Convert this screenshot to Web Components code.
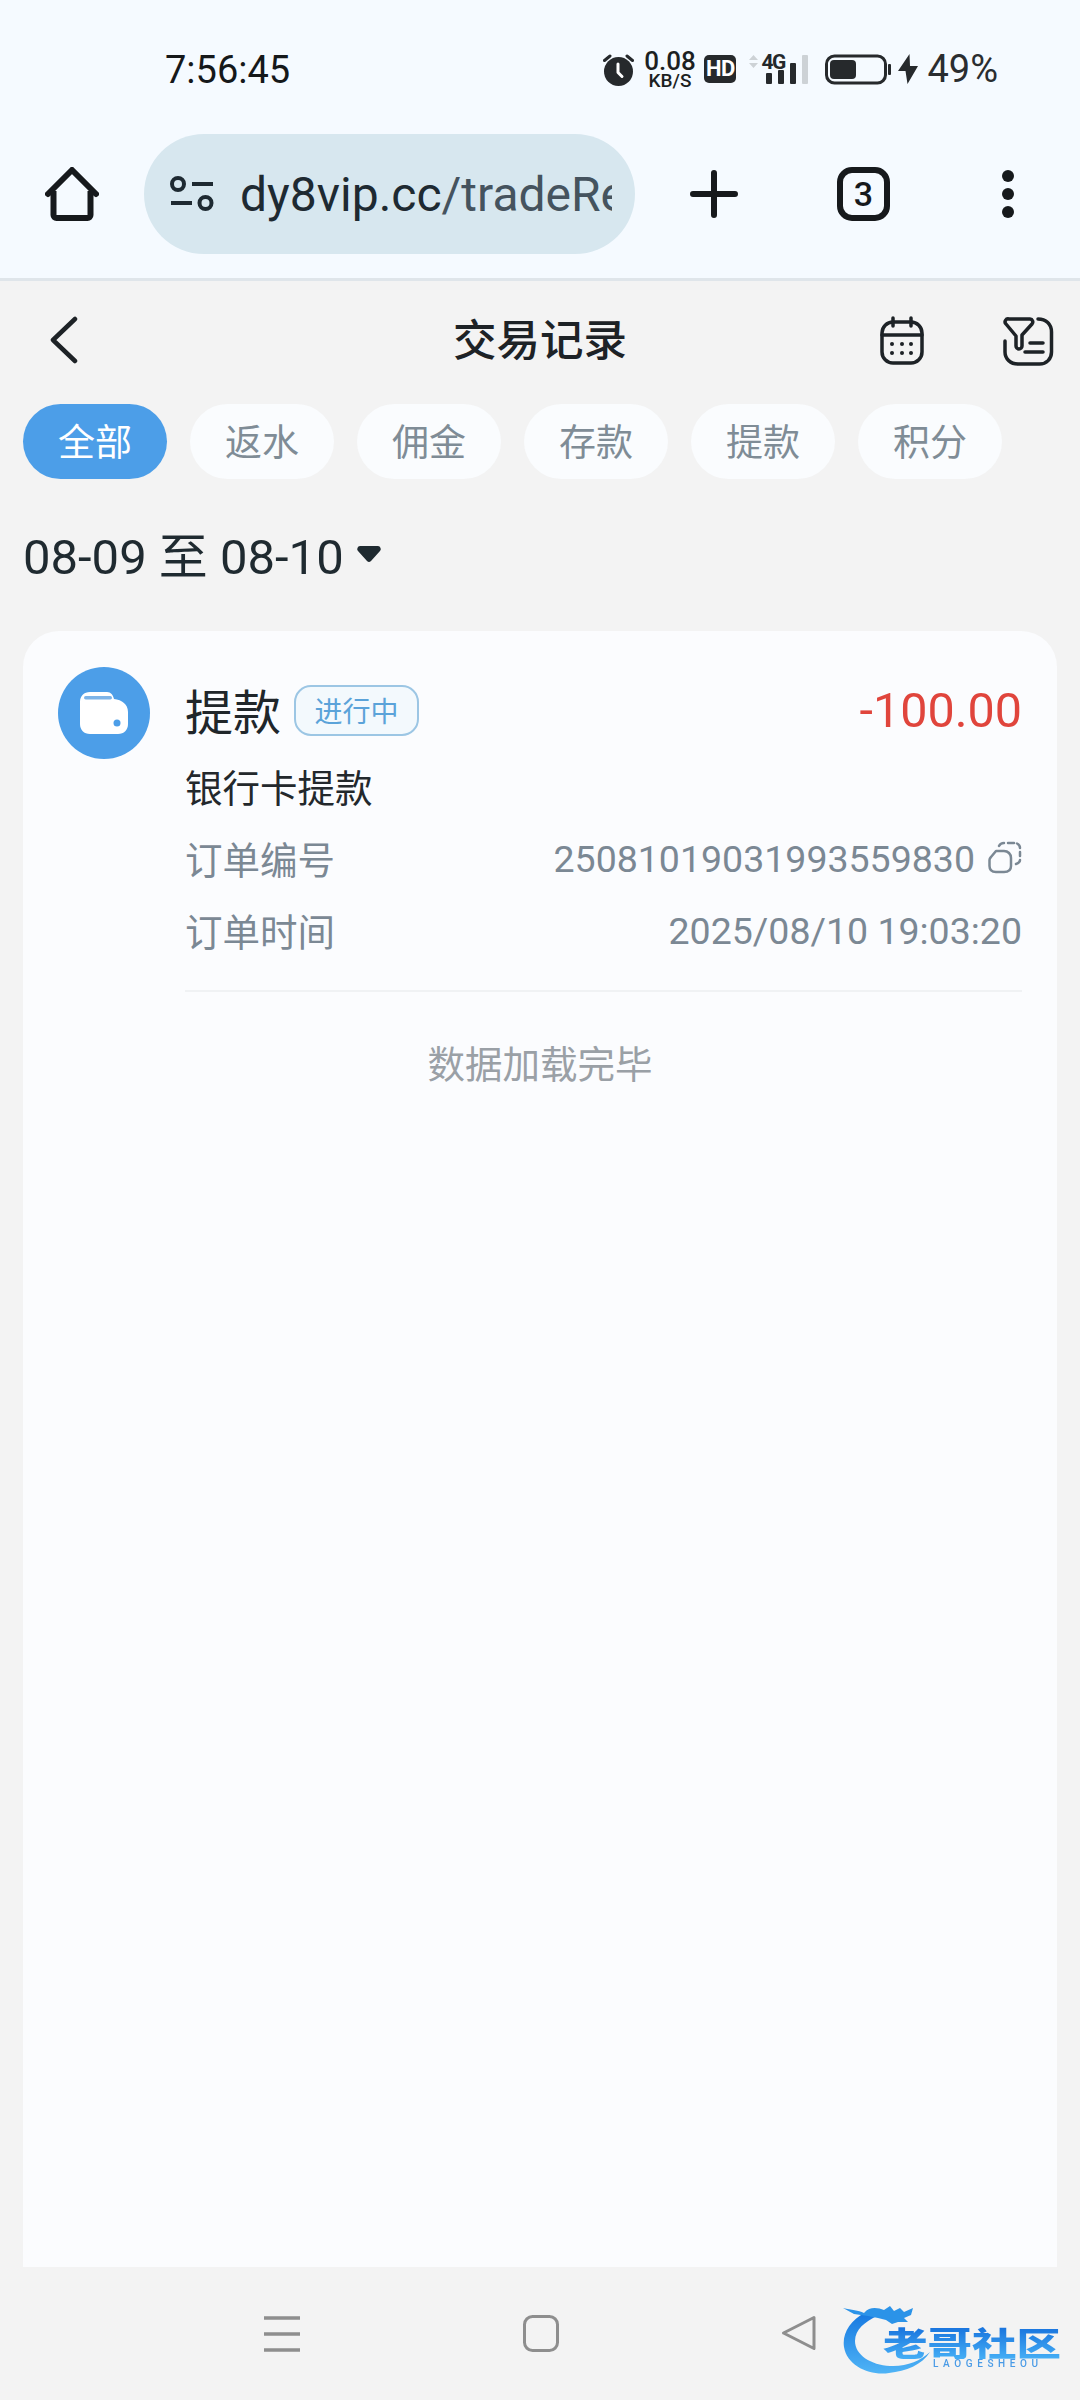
<!DOCTYPE html>
<html lang="zh">
<head>
<meta charset="utf-8">
<title>交易记录</title>
<style>
  html, body { margin: 0; padding: 0; }
  body {
    width: 1080px;
    height: 2400px;
    overflow: hidden;
    display: flex;
    flex-direction: column;
    position: relative;
    background: #f3f3f3;
    font-family: Roboto, "Noto Sans CJK SC", sans-serif;
  }
</style>
</head>
<body>
  <status-bar></status-bar>
  <browser-toolbar domain="dy8vip.cc" path="/tradeRecord" tabs="3"></browser-toolbar>
  <page-header>交易记录</page-header>
  <filter-chips>
    <filter-chip active>全部</filter-chip>
    <filter-chip>返水</filter-chip>
    <filter-chip>佣金</filter-chip>
    <filter-chip>存款</filter-chip>
    <filter-chip>提款</filter-chip>
    <filter-chip>积分</filter-chip>
  </filter-chips>
  <date-range>08-09 至 08-10</date-range>
  <trade-panel>
    <trade-item title="提款" status="进行中" amount="-100.00" method="银行卡提款">
      <trade-row label="订单编号" value="25081019031993559830" copy></trade-row>
      <trade-row label="订单时间" value="2025/08/10 19:03:20"></trade-row>
    </trade-item>
    <span slot="footer">数据加载完毕</span>
  </trade-panel>
  <nav-bar></nav-bar>
  <site-watermark></site-watermark>

<script>
// каждый элемент держит свой шаблон и стили внутри shadow root
function define(name, html, attrs) {
  const tpl = document.createElement('template');
  tpl.innerHTML = html;
  customElements.define(name, class extends HTMLElement {
    constructor() {
      super();
      this.attachShadow({ mode: 'open' }).appendChild(tpl.content.cloneNode(true));
    }
    connectedCallback() {
      (attrs || []).forEach(a => {
        this.shadowRoot.querySelectorAll('[data-' + a + ']').forEach(el => {
          el.textContent = this.getAttribute(a) || '';
        });
      });
      if (this.hasAttribute('copy')) {
        this.shadowRoot.querySelector('.copy').style.display = 'block';
      }
    }
  });
}

define('status-bar', `
<style>
  :host { display: flex; align-items: center; box-sizing: border-box; height: 134px; padding: 4px 82px 0 165px; background: #f5faff; color: #24282b; flex: none; }
  .time { font-size: 38px; color: #15181a; margin-top: 2px; }
  .right { margin-left: auto; display: flex; align-items: center; }
  svg { display: block; flex: none; }
  .speed { width: 51px; margin: 0 9px 0 10px; display: flex; flex-direction: column; align-items: center; line-height: 1; color: #1c1f22; }
  .speed b { font-size: 26px; font-weight: 500; height: 20px; line-height: 20px; }
  .speed i { font-style: normal; font-size: 19px; font-weight: 500; height: 15px; line-height: 15px; margin-top: 2px; }
  .hd { width: 32px; height: 28px; border-radius: 5px; background: #26292c; color: #fff; font: 700 22px/28px "Liberation Sans Narrow", Roboto, sans-serif; text-align: center; letter-spacing: -.5px; margin-right: 13px; }
  .net { position: relative; width: 59px; height: 31px; margin-right: 17px; }
  .net span { position: absolute; left: 12px; top: -3px; font-size: 21px; line-height: 22px; font-weight: 700; letter-spacing: -1.500px; color: #24282b; }
  .pct { font-size: 38px; margin-left: 9px; color: #2a2d30; }
</style>
<span class="time">7:56:45</span>
<div class="right">
  <svg width="31" height="33" viewBox="0 0 31 33">
    <circle cx="15.5" cy="18.5" r="14.5" fill="#26292c"/>
    <path d="M1.5 7.5 7 3M29.5 7.5 24 3" stroke="#26292c" stroke-width="3" stroke-linecap="round"/>
    <path d="M15 11v8.5l4 4" fill="none" stroke="#fff" stroke-width="3" stroke-linecap="round" stroke-linejoin="round"/>
  </svg>
  <div class="speed"><b>0.08</b><i>KB/S</i></div>
  <div class="hd">HD</div>
  <div class="net">
    <svg width="59" height="31" viewBox="0 0 59 31">
      <path d="M4.5 1 9 6H0ZM4.5 14 0 9h9Z" fill="#cdd2d6"/>
      <rect x="17" y="19" width="6" height="11" rx="1" fill="#26292c"/>
      <rect x="29" y="16" width="6" height="14" rx="1" fill="#26292c"/>
      <rect x="41" y="9" width="6" height="21" rx="1" fill="#26292c"/>
      <rect x="53" y="1" width="6" height="29" rx="1" fill="#cdd2d6"/>
    </svg>
    <span>4G</span>
  </div>
  <svg width="66" height="31" viewBox="0 0 66 31">
    <rect x="1.5" y="2" width="59" height="27" rx="8" fill="none" stroke="#26292c" stroke-width="3"/>
    <rect x="5" y="6" width="26" height="19" rx="4" fill="#26292c"/>
    <rect x="63" y="10" width="3" height="11" rx="1" fill="#26292c"/>
  </svg>
  <svg style="margin-left:7px" width="20" height="30" viewBox="0 0 20 30">
    <path d="M11.5 0 0 17h7.5L9.5 30 20 12h-8Z" fill="#26292c"/>
  </svg>
  <span class="pct">49%</span>
</div>`);

define('browser-toolbar', `
<style>
  :host { display: flex; align-items: flex-start; box-sizing: content-box; height: 144px; padding-left: 45px; background: #f5faff; border-bottom: 3px solid #dfe5ea; color: #16191c; flex: none; }
  svg { display: block; flex: none; }
  .home { margin: 33px 45px 0 0; }
  .pill { width: 491px; height: 120px; border-radius: 60px; background: #d7e7ef; display: flex; align-items: center; padding-left: 26px; box-sizing: border-box; flex: none; }
  .url { width: 372px; margin-left: 26px; overflow: hidden; white-space: nowrap; font-size: 48px; color: #1e2a32; }
  .url span { color: #45535e; }
  .plus { margin: 36px 0 0 55px; }
  .tabs { margin: 33px 0 0 99px; width: 53px; height: 54px; box-sizing: border-box; border: 6px solid #16191c; border-radius: 15px; display: flex; align-items: center; justify-content: center; font-size: 34px; font-weight: 500; }
  .more { margin: 36px 0 0 112px; }
</style>
<svg class="home" width="54" height="54" viewBox="0 0 54 54">
  <path d="M3 27 27 3l24 24" fill="none" stroke="#16191c" stroke-width="6" stroke-linecap="round" stroke-linejoin="round"/>
  <path d="M8.500 24V48a3 3 0 0 0 3 3H42.500a3 3 0 0 0 3-3V24" fill="none" stroke="#16191c" stroke-width="6" stroke-linejoin="round"/>
</svg>
<div class="pill">
  <svg width="44" height="36" viewBox="0 0 44 36">
    <circle cx="8" cy="8" r="6" fill="none" stroke="#1e2a32" stroke-width="4"/>
    <path d="M22 8h21M1 27h21" stroke="#1e2a32" stroke-width="4"/>
    <circle cx="35.500" cy="27" r="6" fill="none" stroke="#1e2a32" stroke-width="4"/>
  </svg>
  <div class="url"><b data-domain style="font-weight:400"></b><span data-path></span></div>
</div>
<svg class="plus" width="48" height="48" viewBox="0 0 48 48">
  <path d="M24 3v42M3 24h42" stroke="#16191c" stroke-width="6" stroke-linecap="round"/>
</svg>
<div class="tabs" data-tabs></div>
<svg class="more" width="12" height="48" viewBox="0 0 12 48">
  <circle cx="6" cy="6" r="6" fill="#16191c"/><circle cx="6" cy="24" r="6" fill="#16191c"/><circle cx="6" cy="42" r="6" fill="#16191c"/>
</svg>`, ['domain', 'path', 'tabs']);

define('page-header', `
<style>
  :host { display: grid; grid-template-columns: 1fr auto 1fr; align-items: center; height: 118px; flex: none; color: #1d2226; }
  .title { font-size: 43.500px; font-weight: 500; margin-bottom: 5px; }
  svg { display: block; }
  .left { padding-left: 49px; }
  .right { display: flex; justify-content: flex-end; gap: 78px; padding: 2px 25px 0 0; }
</style>
<div class="left">
  <svg width="30" height="48" viewBox="0 0 30 48"><path d="M26 3 4 24l22 21" fill="none" stroke="#1d2226" stroke-width="4.500" stroke-linecap="round" stroke-linejoin="round"/></svg>
</div>
<div class="title"><slot></slot></div>
<div class="right">
  <svg width="46" height="50" viewBox="0 0 46 50">
    <rect x="3" y="6" width="40" height="41" rx="11" fill="none" stroke="#1d2226" stroke-width="3.500"/>
    <path d="M3 19h40M14 2v8M32 2v8" stroke="#1d2226" stroke-width="3.500" stroke-linecap="round"/>
    <g fill="#1d2226"><circle cx="13" cy="28" r="2"/><circle cx="23" cy="28" r="2"/><circle cx="32" cy="28" r="2"/><circle cx="13" cy="37" r="2"/><circle cx="23" cy="37" r="2"/><circle cx="32" cy="37" r="2"/></g>
  </svg>
  <svg width="52" height="50" viewBox="0 0 52 50">
    <g fill="none" stroke="#1d2226" stroke-width="3.500" stroke-linecap="round" stroke-linejoin="round">
      <path d="M6 3H27a3 3 0 0 1 2 5L19 19V30a3 3 0 0 1-6 0V20L3 8a3 3 0 0 1 3-5Z"/>
      <path d="M35 3c8 0 13.500 5 13.500 13V36c0 7-5 12-12 12H15C7.500 48 2 43 2 36V25"/>
      <path d="M27 27H40M22 36H40"/>
    </g>
  </svg>
</div>`);

define('filter-chips', `
<style>
  :host { display: flex; gap: 23px; padding: 5px 23px 0; flex: none; }
</style>
<slot></slot>`);

define('filter-chip', `
<style>
  :host { display: flex; align-items: center; justify-content: center; box-sizing: border-box; width: 144px; height: 75px; padding-bottom: 3px; border-radius: 38px; background: #fafcfe; color: #7f8c96; font-size: 37px; }
  :host([active]) { background: #4c9ee8; color: #fff; }
</style>
<slot></slot>`);

define('date-range', `
<style>
  :host { display: flex; align-items: center; gap: 12px; box-sizing: border-box; height: 152px; padding: 0 0 6px 23px; flex: none; font-size: 49px; color: #1f2a30; }
  svg { display: block; margin-top: 4px; }
</style>
<span><slot></slot></span>
<svg width="26" height="18" viewBox="0 0 26 18"><path d="M4 1h18a3 3 0 0 1 2 5L15 16a3 3 0 0 1-4 0L2 6a3 3 0 0 1 2-5Z" fill="#1f2a30"/></svg>`);

define('trade-panel', `
<style>
  :host { display: block; flex: 1; margin: 0 23px; background: #fbfcfe; border-radius: 36px 36px 0 0; padding: 36px 35px 0; box-sizing: border-box; }
  .foot { height: 138px; display: flex; align-items: center; justify-content: center; color: #9aa0a6; font-size: 37.500px; }
</style>
<slot></slot>
<div class="foot"><slot name="footer"></slot></div>`);

define('trade-item', `
<style>
  :host { display: grid; grid-template-columns: 92px 1fr; column-gap: 35px; color: #20262a; }
  .avatar { width: 92px; height: 92px; border-radius: 50%; background: #4c9ee8; display: flex; align-items: center; justify-content: center; }
  svg { display: block; }
  .head { display: flex; align-items: center; height: 84px; margin-bottom: -2px; }
  .title { font-size: 48px; }
  .badge { margin: 2px 0 0 13px; width: 125px; height: 51px; box-sizing: border-box; border: 2px solid #9cc6e4; border-radius: 17px; background: #f3f9fd; color: #5ba3d9; font-size: 28px; display: flex; align-items: center; justify-content: center; }
  .amount { margin: 2px 0 0 auto; font-size: 48.500px; color: #e0453c; }
  .method { height: 72px; display: flex; align-items: center; font-size: 37.500px; color: #23282c; }
  .rows { display: block; padding-bottom: 25px; border-bottom: 2px solid #f0f2f4; }
  .body { min-width: 0; }
</style>
<div class="avatar">
  <svg width="48" height="42" viewBox="0 0 48 42">
    <path d="M10 0H27C31 0 33 3 34 7 42 8 48 12 48 20V32C48 38 44 42 38 42H10C4 42 0 38 0 32V10C0 4 4 0 10 0Z" fill="#fff"/>
    <rect x="4" y="4" width="28" height="3.500" rx="1.700" fill="#7db4e8"/>
    <circle cx="37" cy="31" r="3.500" fill="#4c9ee8"/>
  </svg>
</div>
<div class="body">
  <div class="head">
    <span class="title" data-title></span>
    <span class="badge" data-status></span>
    <span class="amount" data-amount></span>
  </div>
  <div class="method" data-method></div>
  <div class="rows"><slot></slot></div>
</div>`, ['title', 'status', 'amount', 'method']);

define('trade-row', `
<style>
  :host { display: flex; align-items: center; height: 72px; font-size: 37.500px; color: #7b8894; }
  .value { margin: 4px 0 0 auto; }
  .copy { display: none; margin-left: 13px; flex: none; }
</style>
<span data-label></span>
<span class="value" data-value></span>
<svg class="copy" width="34" height="33" viewBox="0 0 34 33">
  <path d="M3 16 8 10H16C20 10 23 13 23 17V25C23 29 20 31 16 31H8C4 31 1.500 29 1.500 25V19C1.500 18 2 17 3 16Z" fill="none" stroke="#7b8894" stroke-width="2.500" stroke-linejoin="round"/>
  <path d="M11 5C12 3 14 2 16 2M20 2H26M29 2.500C31 3.500 32 5 32 7M32 11V15M32 19C32 21 31 22 28 23" fill="none" stroke="#7b8894" stroke-width="2.500" stroke-linecap="round"/>
</svg>`, ['label', 'value']);

define('nav-bar', `
<style>
  :host { display: flex; align-items: flex-start; height: 133px; flex: none; padding: 48px 0 0 264px; box-sizing: border-box; }
  svg { display: block; flex: none; }
</style>
<svg width="36" height="38" viewBox="0 0 36 38"><path d="M0 3h36M0 19h36M0 35h36" stroke="#8e8e8e" stroke-width="3.500"/></svg>
<svg style="margin-left:223px" width="36" height="37" viewBox="0 0 36 37"><rect x="1.500" y="1.500" width="33" height="34" rx="8" fill="none" stroke="#8e8e8e" stroke-width="3"/></svg>
<svg style="margin-left:222px" width="36" height="36" viewBox="0 0 36 36"><path d="M33 2.500 2.500 18 33 33.500Z" fill="none" stroke="#8e8e8e" stroke-width="3" stroke-linejoin="round"/></svg>`);

// водяной знак поверх навигации
define('site-watermark', `
<style>
  :host { position: absolute; left: 840px; top: 2300px; width: 240px; height: 80px; filter: blur(.7px); }
  svg { position: absolute; left: 0; top: 0; }
  .name { position: absolute; left: 43px; top: 25px; font: 900 44.500px/46px "Noto Sans CJK SC", sans-serif; white-space: nowrap; background: linear-gradient(#1670dc, #45aef5); -webkit-background-clip: text; background-clip: text; color: transparent; transform: scaleY(.74); transform-origin: 0 0; }
  .sub { position: absolute; left: 93px; top: 58px; font: 500 10px/12px Roboto, sans-serif; letter-spacing: 4.600px; color: #4a9be6; white-space: nowrap; }
</style>
<svg width="100" height="80" viewBox="0 0 100 80">
  <defs><linearGradient id="g" x1="0" y1="0" x2="0" y2="1"><stop offset="0" stop-color="#1678e0"/><stop offset="1" stop-color="#4fb4f6"/></linearGradient></defs>
  <path d="M25 13C10 20 2 34 4 47 7 66 30 76 49 73 66 71 82 65 90 52 80 61 66 67 50 66 31 65 15 55 15 41 15 29 25 22 37 16Z" fill="url(#g)"/>
  <path d="M3 8C12 10 18 10 24 13 30 6 38 8 44 10L50 6 54 11 60 8 64 12 73 8 71 15 64 18 68 22 58 22 52 24 46 20 38 18 28 16 14 14Z" fill="#2b93e8"/>
</svg>
<span class="name">老哥社区</span>
<span class="sub">LAOGESHEOU</span>`);
</script>
</body>
</html>
